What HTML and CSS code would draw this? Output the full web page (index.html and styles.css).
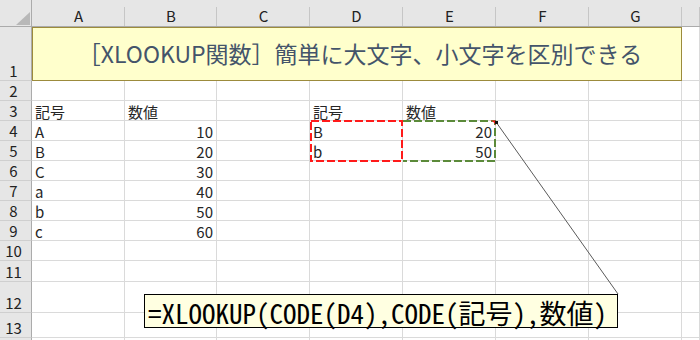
FILE: index.html
```html
<!DOCTYPE html>
<html lang="ja">
<head>
<meta charset="utf-8">
<title>XLOOKUP</title>
<link rel="stylesheet" href="styles.css">
</head>
<body>
<div class="wrap">
  <div class="sheet">
    <div class="corner"><svg class="tri" width="32" height="27" viewBox="0 0 32 27"><polygon points="16,25 30,25 30,12" fill="#b8b8b8"/></svg></div>
    <div class="ch">A</div><div class="ch">B</div><div class="ch">C</div><div class="ch">D</div><div class="ch">E</div><div class="ch">F</div><div class="ch">G</div><div class="ch"></div>

    <div class="rh">1</div><div class="title">［XLOOKUP関数］簡単に大文字、小文字を区別できる</div><div class="c"></div>
    <div class="rh">2</div><div class="c"></div><div class="c"></div><div class="c"></div><div class="c"></div><div class="c"></div><div class="c"></div><div class="c"></div><div class="c"></div>
    <div class="rh">3</div><div class="c">記号</div><div class="c">数値</div><div class="c"></div><div class="c">記号</div><div class="c">数値</div><div class="c"></div><div class="c"></div><div class="c"></div>
    <div class="rh">4</div><div class="c">A</div><div class="c num">10</div><div class="c"></div><div class="c">B</div><div class="c num">20</div><div class="c"></div><div class="c"></div><div class="c"></div>
    <div class="rh">5</div><div class="c">B</div><div class="c num">20</div><div class="c"></div><div class="c">b</div><div class="c num">50</div><div class="c"></div><div class="c"></div><div class="c"></div>
    <div class="rh">6</div><div class="c">C</div><div class="c num">30</div><div class="c"></div><div class="c"></div><div class="c"></div><div class="c"></div><div class="c"></div><div class="c"></div>
    <div class="rh">7</div><div class="c">a</div><div class="c num">40</div><div class="c"></div><div class="c"></div><div class="c"></div><div class="c"></div><div class="c"></div><div class="c"></div>
    <div class="rh">8</div><div class="c">b</div><div class="c num">50</div><div class="c"></div><div class="c"></div><div class="c"></div><div class="c"></div><div class="c"></div><div class="c"></div>
    <div class="rh">9</div><div class="c">c</div><div class="c num">60</div><div class="c"></div><div class="c"></div><div class="c"></div><div class="c"></div><div class="c"></div><div class="c"></div>
    <div class="rh">10</div><div class="c"></div><div class="c"></div><div class="c"></div><div class="c"></div><div class="c"></div><div class="c"></div><div class="c"></div><div class="c"></div>
    <div class="rh">11</div><div class="c"></div><div class="c"></div><div class="c"></div><div class="c"></div><div class="c"></div><div class="c"></div><div class="c"></div><div class="c"></div>
    <div class="rh">12</div><div class="c"></div><div class="c"></div><div class="c"></div><div class="c"></div><div class="c"></div><div class="c"></div><div class="c"></div><div class="c"></div>
    <div class="rh">13</div><div class="c"></div><div class="c"></div><div class="c"></div><div class="c"></div><div class="c"></div><div class="c"></div><div class="c"></div><div class="c"></div>
    <div class="rh"></div><div class="c"></div><div class="c"></div><div class="c"></div><div class="c"></div><div class="c"></div><div class="c"></div><div class="c"></div><div class="c"></div>
  </div>

  <svg class="overlay" width="700" height="340" viewBox="0 0 700 340">
    <path d="M403 121 H495 V161 H403" fill="none" stroke="#5b8a3a" stroke-width="2" stroke-dasharray="8 3"/>
    <rect x="311" y="121" width="91" height="40" fill="none" stroke="#ff1a1a" stroke-width="2" stroke-dasharray="8 3"/>
    <path d="M489 120.5 Q494.5 120.5 495.5 126 L495.5 120.5 Z" fill="#ff1a1a"/>
    <line x1="496" y1="122" x2="618" y2="294" stroke="#5a5a5a" stroke-width="1"/>
    <rect x="495" y="121" width="3" height="3" fill="#111"/>
  </svg>

  <div class="callout">=XLOOKUP(CODE(D4),CODE(記号),数値)</div>
</div>
</body>
</html>
```

FILE: styles.css
```css
* { box-sizing: border-box; }

body {
  margin: 0;
  background: #ffffff;
}

.wrap {
  position: relative;
  width: 700px;
  height: 340px;
  overflow: hidden;
  font-family: "Noto Sans CJK JP", "Noto Sans", sans-serif;
  color: #262626;
}

.sheet {
  display: grid;
  grid-template-columns: 32px 93px 92px 93px 93px 93px 93px 93px 18px;
  grid-template-rows: 27px 54px 20px repeat(8, 20px) 21px 31px 25px 20px;
}

.corner {
  background: #e6e6e6;
  border-right: 1px solid #ababab;
  border-bottom: 1px solid #ababab;
}

.tri {
  display: block;
}

.ch {
  background: linear-gradient(#c6c6c6, #c6c6c6) no-repeat right 0 top 7px / 1px 20px, #e6e6e6;
  border-bottom: 1px solid #ababab;
  font-size: 15px;
  line-height: 18px;
  padding-top: 7px;
  text-align: center;
  color: #222222;
}

.rh {
  background: #e6e6e6;
  border-right: 1px solid #ababab;
  border-bottom: 1px solid #cfcfcf;
  display: flex;
  align-items: flex-end;
  justify-content: center;
  padding-right: 4px;
  font-size: 15px;
  line-height: 18px;
  color: #222222;
}

.c {
  border-right: 1px solid #dadada;
  border-bottom: 1px solid #dadada;
  display: flex;
  align-items: flex-end;
  padding: 0 3px;
  font-size: 15px;
  line-height: 17px;
  white-space: nowrap;
}

.num {
  justify-content: flex-end;
}

.title {
  grid-column: span 7;
  background: #ffffcc;
  border: 1px solid #9c8b3c;
  display: flex;
  align-items: center;
  justify-content: center;
  padding-left: 6px;
  padding-bottom: 2px;
  font-size: 23px;
  color: #44546a;
  white-space: nowrap;
}

.overlay {
  position: absolute;
  left: 0;
  top: 0;
  pointer-events: none;
}

.callout {
  position: absolute;
  left: 144px;
  top: 294px;
  width: 474px;
  height: 34px;
  border: 1px solid #000000;
  background: #ffffe1;
  display: flex;
  align-items: flex-end;
  padding-left: 3px;
  font-family: "Noto Sans Mono CJK JP", "Noto Sans CJK JP", monospace;
  font-size: 27px;
  line-height: 28px;
  color: #000000;
  white-space: nowrap;
}
```
